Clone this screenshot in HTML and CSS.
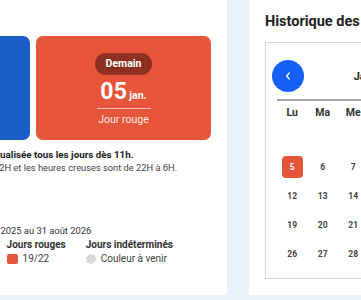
FILE: index.html
```html
<!DOCTYPE html>
<html lang="fr">
<head>
<meta charset="utf-8">
<link rel="stylesheet" href="styles.css">
</head>
<body>
<div class="page">
  <section class="panel panel-left">
    <div class="cards">
      <div class="day-card card-blue">
        <span class="pill pill-blue">Aujourd'hui</span>
        <div class="date"><span class="day">04</span><span class="month">jan.</span></div>
        <div class="divider"></div>
        <div class="label">Jour bleu</div>
      </div>
      <div class="day-card card-red">
        <span class="pill pill-red">Demain</span>
        <div class="date"><span class="day">05</span><span class="month">jan.</span></div>
        <div class="divider"></div>
        <div class="label">Jour rouge</div>
      </div>
    </div>
    <p class="note-strong">La couleur du lendemain est actualisée tous les jours dès 11h.</p>
    <p class="note">Les heures pleines sont de 06H à 22H et les heures creuses sont de 22H à 6H.</p>
    <p class="season">Période Tempo : du 1er septembre 2025 au 31 août 2026</p>
    <div class="legend">
      <div class="legend-item">
        <div class="legend-title">Jours bleus</div>
        <div class="legend-value"><span class="swatch sw-blue"></span>280/300</div>
      </div>
      <div class="legend-item">
        <div class="legend-title">Jours blancs</div>
        <div class="legend-value"><span class="swatch sw-white"></span>40/43</div>
      </div>
      <div class="legend-item">
        <div class="legend-title">Jours rouges</div>
        <div class="legend-value"><span class="swatch sw-red"></span>19/22</div>
      </div>
      <div class="legend-item">
        <div class="legend-title">Jours indéterminés</div>
        <div class="legend-value"><span class="swatch sw-undef"></span>Couleur à venir</div>
      </div>
    </div>
  </section>
  <section class="panel panel-right">
    <h2 class="title">Historique des couleurs</h2>
    <div class="calendar">
      <div class="cal-head">
        <button class="nav-btn" aria-label="Mois précédent">
          <svg width="10" height="10" viewBox="0 0 10 10"><path d="M6.2 2 L3.6 5 L6.2 8" fill="none" stroke="#fff" stroke-width="1.3" stroke-linecap="round" stroke-linejoin="round"/></svg>
        </button>
        <div class="month-name">Janvier 2026</div>
        <button class="nav-btn" aria-label="Mois suivant">
          <svg width="10" height="10" viewBox="0 0 10 10"><path d="M3.8 2 L6.4 5 L3.8 8" fill="none" stroke="#fff" stroke-width="1.3" stroke-linecap="round" stroke-linejoin="round"/></svg>
        </button>
      </div>
      <div class="cal-line"></div>
      <div class="grid">
        <div class="dow">Lu</div><div class="dow">Ma</div><div class="dow">Me</div><div class="dow">Je</div><div class="dow">Ve</div><div class="dow">Sa</div><div class="dow">Di</div>
        <div class="d"></div><div class="d"></div><div class="d"></div><div class="d">1</div><div class="d">2</div><div class="d">3</div><div class="d">4</div>
        <div class="d"><span class="red">5</span></div><div class="d">6</div><div class="d">7</div><div class="d">8</div><div class="d">9</div><div class="d">10</div><div class="d">11</div>
        <div class="d">12</div><div class="d">13</div><div class="d">14</div><div class="d">15</div><div class="d">16</div><div class="d">17</div><div class="d">18</div>
        <div class="d">19</div><div class="d">20</div><div class="d">21</div><div class="d">22</div><div class="d">23</div><div class="d">24</div><div class="d">25</div>
        <div class="d">26</div><div class="d">27</div><div class="d">28</div><div class="d">29</div><div class="d">30</div><div class="d">31</div><div class="d"></div>
      </div>
    </div>
  </section>
</div>
</body>
</html>
```
FILE: styles.css
```css
* { box-sizing: border-box; }
html, body { margin: 0; padding: 0; }
body {
  background: #e9f1fa;
  font-family: Roboto, "Open Sans", sans-serif;
  color: #222;
  overflow: hidden;
}
.page {
  display: flex;
  gap: 22px;
  margin-left: -161px;
  height: 295px;
  width: 1000px;
}
.panel {
  background: #fff;
  flex: none;
}
.panel-left {
  width: 388px;
  padding: 36px 16px 0;
}
.cards {
  display: flex;
  gap: 6px;
}
.day-card {
  width: 175px;
  height: 104px;
  border-radius: 7px;
  display: flex;
  flex-direction: column;
  align-items: center;
  padding-top: 17px;
  color: #fff;
}
.card-blue { background: #1b5cc6; }
.card-red { background: #e6543a; }
.pill {
  height: 22px;
  line-height: 22px;
  padding: 0 11px;
  border-radius: 11px;
  font-size: 10.5px;
  font-weight: 700;
}
.pill-red { background: #8d2f21; }
.pill-blue { background: #113d86; }
.date {
  display: flex;
  align-items: baseline;
  margin-top: 3px;
  height: 27px;
  line-height: 27px;
}
.day { font-size: 23px; font-weight: 700; letter-spacing: 0.3px; }
.month { font-size: 10.5px; font-weight: 700; margin-left: 2px; }
.divider {
  width: 54px;
  height: 1px;
  background: rgba(255, 255, 255, 0.65);
  margin-top: 3px;
}
.label {
  font-size: 10.5px;
  margin-top: 4px;
  color: #fde9e5;
}
.note-strong {
  margin: 9px 0 0;
  text-indent: 5px;
  font-size: 9.8px;
  font-weight: 700;
  line-height: 12px;
  color: #222;
}
.note {
  margin: 0;
  font-size: 9.3px;
  line-height: 13px;
  color: #444;
}
.season {
  margin: 50px 0 0;
  font-size: 9.4px;
  line-height: 14px;
  color: #333;
}
.legend {
  display: flex;
  gap: 20px;
  margin-top: 0;
}
.legend-title {
  font-size: 10px;
  font-weight: 700;
  line-height: 13px;
  color: #333;
}
.legend-value {
  display: flex;
  align-items: center;
  gap: 5px;
  font-size: 10px;
  line-height: 13px;
  color: #444;
  margin-top: 1px;
}
.swatch {
  width: 11px;
  height: 10px;
  border-radius: 2px;
  display: inline-block;
}
.sw-red { background: #e6543a; }
.sw-blue { background: #1b5cc6; }
.sw-white { background: #fff; border: 1px solid #ccc; }
.sw-undef {
  border-radius: 50%;
  width: 10px;
  height: 10px;
  background: repeating-linear-gradient(135deg, #cfcfcf 0 1.5px, #e6e6e6 1.5px 3px);
}
.panel-right {
  width: 400px;
  padding: 0 16px;
}
.title {
  margin: 12px 0 0;
  font-size: 14.5px;
  line-height: 20px;
  font-weight: 700;
  color: #222;
}
.calendar {
  margin-top: 10px;
  border: 1px solid #d6d6d6;
  width: 242px;
  height: 237px;
  padding: 17px 6px 0;
}
.cal-head {
  display: flex;
  align-items: center;
  justify-content: space-between;
}
.nav-btn {
  width: 32px;
  height: 32px;
  border-radius: 50%;
  border: 0;
  background: #1560f2;
  display: flex;
  align-items: center;
  justify-content: center;
  padding: 0;
}
.month-name {
  font-size: 11px;
  font-weight: 700;
  color: #222;
}
.cal-line {
  height: 2px;
  background: #a9a9a9;
  margin: 7px 5px 0;
}
.grid {
  display: grid;
  grid-template-columns: repeat(7, 30.5px);
  grid-auto-rows: 29px;
  grid-template-rows: 22px;
  margin: 0 5px;
}
.dow {
  font-size: 10.5px;
  font-weight: 700;
  color: #333;
  display: flex;
  align-items: center;
  justify-content: center;
}
.d {
  font-size: 8.5px;
  font-weight: 700;
  color: #444;
  display: flex;
  align-items: center;
  justify-content: center;
}
.red {
  width: 21px;
  height: 22px;
  border-radius: 4px;
  background: #e6543a;
  color: #fff;
  display: flex;
  align-items: center;
  justify-content: center;
}
```
